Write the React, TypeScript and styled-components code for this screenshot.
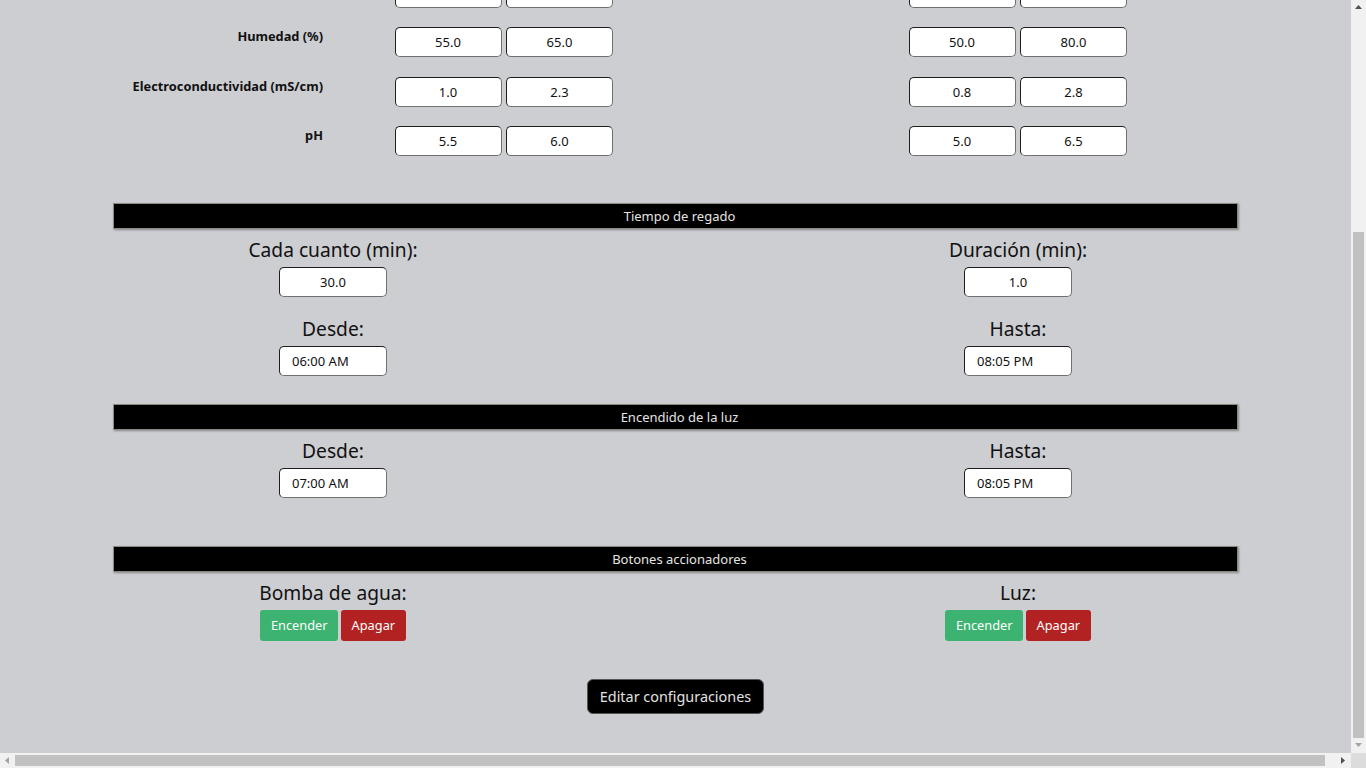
import React, { useLayoutEffect, useEffect, useRef } from "react";
import styled, { createGlobalStyle } from "styled-components";

const Global = createGlobalStyle`
  html, body { margin: 0; overflow: hidden; }
  body {
    background: #cdced2;
    font-family: "Noto Sans", "Open Sans", sans-serif;
    color: #111;
  }
`;

/* ---------- window frame with classic scrollbars ---------- */

const Frame = styled.div`
  width: 1366px;
  height: 768px;
  display: grid;
  grid-template-columns: 1351px 15px;
  grid-template-rows: 753px 15px;
  background: #cdced2;
`;

const Viewport = styled.div`
  overflow: hidden;
  scrollbar-width: none;
  &::-webkit-scrollbar { display: none; }
`;

const VScroll = styled.div`
  background: #f1f1f1;
  display: flex;
  flex-direction: column;
`;

const HScroll = styled.div`
  background: #f1f1f1;
  display: flex;
`;

const Corner = styled.div`
  background: #dcdcdc;
`;

const ArrowCell = styled.div`
  width: 15px;
  height: 15px;
  flex: none;
  display: flex;
  align-items: center;
  justify-content: center;
`;

const VTrack = styled.div`
  flex: 1;
  display: flex;
  flex-direction: column;
  justify-content: flex-end;
  align-items: center;
`;

const HTrack = styled.div`
  flex: 1;
  display: flex;
  align-items: center;
`;

const Thumb = styled.div<{ $dir: "v" | "h" }>`
  background: #c1c1c1;
  ${(p) =>
    p.$dir === "v"
      ? "width: 11px; height: 506px;"
      : "height: 11px; width: 1310px;"}
`;

type ArrowDir = "up" | "down" | "left" | "right";
const arrowPts: Record<ArrowDir, string> = {
  up: "1,6 4.5,2 8,6",
  down: "1,2 4.5,6 8,2",
  left: "6,1 2,4.5 6,8",
  right: "2,1 6,4.5 2,8",
};

function Arrow({ dir, active }: { dir: ArrowDir; active: boolean }) {
  return (
    <ArrowCell>
      <svg width="9" height="9" viewBox="0 0 9 9">
        <polygon points={arrowPts[dir]} fill={active ? "#505050" : "#a3a3a3"} />
      </svg>
    </ArrowCell>
  );
}

/* ---------- page ---------- */

const Navbar = styled.nav`
  height: 56px;
  background: #000;
  color: #eee;
  display: flex;
  align-items: center;
  padding: 0 24px;
  font-size: 20px;
`;

const Page = styled.main`
  width: 1125px;
  margin: 0 auto;
  display: flex;
  flex-direction: column;
`;

const Title = styled.h1`
  margin: 24px 0 20px;
  font-size: 28px;
  line-height: 38px;
  font-weight: 600;
  text-align: center;
`;

const Bar = styled.div<{ $mt?: number }>`
  height: 24px;
  padding-left: 8px;
  background: #000;
  border: 1px solid #8a8a80;
  box-shadow: 1px 1px 2px rgba(0, 0, 0, 0.35);
  color: #e4e4e4;
  font-size: 13px;
  line-height: 24px;
  text-align: center;
  margin-top: ${(p) => p.$mt ?? 0}px;
`;

const RangeTable = styled.div`
  display: grid;
  grid-template-columns: 210px 290px 514px;
  row-gap: 19.5px;
  margin-top: 12px;
`;

const HeadCell = styled.div`
  justify-self: end;
  width: 218px;
  text-align: center;
  font-size: 15px;
  font-weight: 700;
  line-height: 20px;
`;

const RowLabel = styled.div`
  text-align: right;
  font-size: 12.8px;
  font-weight: 700;
  line-height: 18px;
`;

const Pair = styled.div`
  justify-self: end;
  display: flex;
  gap: 4.5px;
`;

const NumBox = styled.input<{ $align?: string; $w?: number }>`
  box-sizing: border-box;
  width: ${(p) => p.$w ?? 108}px;
  height: 30px;
  margin: 0;
  padding: 0 12px;
  background: #fff;
  border: 1px solid;
  border-color: #1e1e1e #707070 #707070 #1e1e1e;
  border-radius: 5px;
  font-family: "Noto Sans", "Open Sans", sans-serif;
  font-size: 13px;
  color: #111;
  text-align: ${(p) => p.$align ?? "center"};
  outline: none;
`;

const Split = styled.div<{ $mt?: number; $mb?: number }>`
  display: grid;
  grid-template-columns: 440px 1fr 440px;
  margin-top: ${(p) => p.$mt ?? 0}px;
  margin-bottom: ${(p) => p.$mb ?? 0}px;
`;

const Column = styled.div<{ $col: number }>`
  grid-column: ${(p) => p.$col};
  display: flex;
  flex-direction: column;
  align-items: center;
  gap: 18px;
`;

const Field = styled.div`
  display: flex;
  flex-direction: column;
  align-items: center;
  gap: 4px;
`;

const FieldLabel = styled.div`
  font-size: 19.2px;
  line-height: 27px;
`;

const BtnRow = styled.div`
  display: flex;
  gap: 3px;
`;

const ActBtn = styled.button<{ $kind: "on" | "off" }>`
  height: 31px;
  padding: 0 10.5px 1px;
  border: none;
  border-radius: 3px;
  background: ${(p) => (p.$kind === "on" ? "#3cb371" : "#b22222")};
  color: #fff;
  font-family: "Noto Sans", "Open Sans", sans-serif;
  font-size: 12.8px;
`;

const EditWrap = styled.div`
  display: flex;
  justify-content: center;
  margin: 38px 0 39px;
`;

const EditBtn = styled.button`
  height: 35px;
  padding: 0 12px 1px;
  background: #000;
  color: #e2e2e2;
  border: 1px solid #555;
  border-radius: 6px;
  font-family: "Noto Sans", "Open Sans", sans-serif;
  font-size: 14.4px;
`;

const ranges = [
  { label: "Temperatura (°C)", a: ["20.0", "25.0"], b: ["18.0", "30.0"] },
  { label: "Humedad (%)", a: ["55.0", "65.0"], b: ["50.0", "80.0"] },
  { label: "Electroconductividad (mS/cm)", a: ["1.0", "2.3"], b: ["0.8", "2.8"] },
  { label: "pH", a: ["5.5", "6.0"], b: ["5.0", "6.5"] },
];

function TextField({ label, value, time }: { label: string; value: string; time?: boolean }) {
  return (
    <Field>
      <FieldLabel>{label}</FieldLabel>
      <NumBox readOnly value={value} $align={time ? "left" : "center"} />
    </Field>
  );
}

export default function App() {
  const vp = useRef<HTMLDivElement>(null);
  const toBottom = () => {
    const el = vp.current;
    if (el) el.scrollTop = el.scrollHeight;
  };
  useLayoutEffect(toBottom, []);
  useEffect(toBottom, []);

  return (
    <>
      <Global />
      <Frame>
        <Viewport ref={vp}>
          <Navbar>Invernadero</Navbar>
          <Page>
            <Title>Configuración</Title>
            <Bar>Rangos de los parámetros</Bar>
            <RangeTable>
              <div />
              <HeadCell>Óptimo</HeadCell>
              <HeadCell>Aceptable</HeadCell>
              {ranges.map((r) => (
                <React.Fragment key={r.label}>
                  <RowLabel>{r.label}</RowLabel>
                  <Pair>
                    <NumBox readOnly value={r.a[0]} $w={107} />
                    <NumBox readOnly value={r.a[1]} $w={107} />
                  </Pair>
                  <Pair>
                    <NumBox readOnly value={r.b[0]} $w={107} />
                    <NumBox readOnly value={r.b[1]} $w={107} />
                  </Pair>
                </React.Fragment>
              ))}
            </RangeTable>

            <Bar $mt={47}>Tiempo de regado</Bar>
            <Split $mt={7} $mb={28}>
              <Column $col={1}>
                <TextField label="Cada cuanto (min):" value="30.0" />
                <TextField label="Desde:" value="06:00 AM" time />
              </Column>
              <Column $col={3}>
                <TextField label="Duración (min):" value="1.0" />
                <TextField label="Hasta:" value="08:05 PM" time />
              </Column>
            </Split>

            <Bar>Encendido de la luz</Bar>
            <Split $mt={7} $mb={48}>
              <Column $col={1}>
                <TextField label="Desde:" value="07:00 AM" time />
              </Column>
              <Column $col={3}>
                <TextField label="Hasta:" value="08:05 PM" time />
              </Column>
            </Split>

            <Bar>Botones accionadores</Bar>
            <Split $mt={7}>
              <Column $col={1}>
                <Field>
                  <FieldLabel>Bomba de agua:</FieldLabel>
                  <BtnRow>
                    <ActBtn $kind="on">Encender</ActBtn>
                    <ActBtn $kind="off">Apagar</ActBtn>
                  </BtnRow>
                </Field>
              </Column>
              <Column $col={3}>
                <Field>
                  <FieldLabel>Luz:</FieldLabel>
                  <BtnRow>
                    <ActBtn $kind="on">Encender</ActBtn>
                    <ActBtn $kind="off">Apagar</ActBtn>
                  </BtnRow>
                </Field>
              </Column>
            </Split>

            <EditWrap>
              <EditBtn>Editar configuraciones</EditBtn>
            </EditWrap>
          </Page>
        </Viewport>

        <VScroll>
          <Arrow dir="up" active />
          <VTrack>
            <Thumb $dir="v" />
          </VTrack>
          <Arrow dir="down" active={false} />
        </VScroll>

        <HScroll>
          <Arrow dir="left" active={false} />
          <HTrack>
            <Thumb $dir="h" />
          </HTrack>
          <Arrow dir="right" active />
        </HScroll>

        <Corner />
      </Frame>
    </>
  );
}
